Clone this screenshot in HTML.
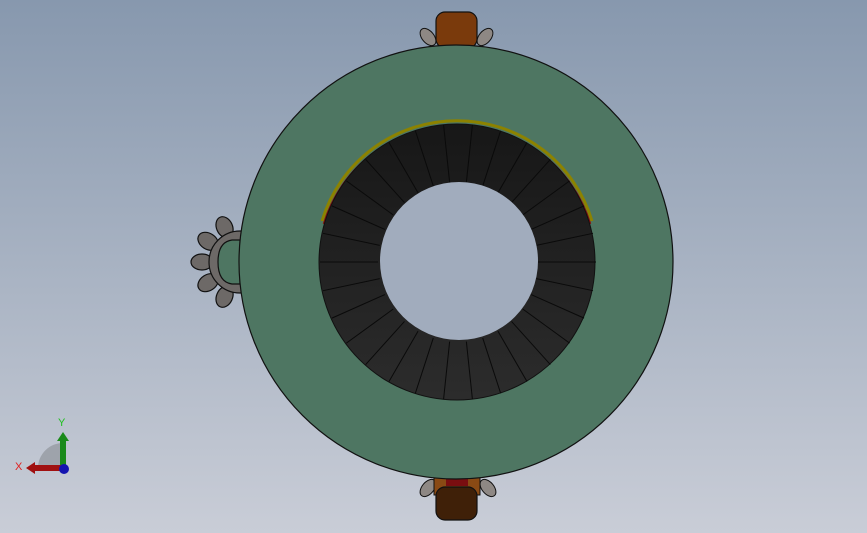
<!DOCTYPE html>
<html><head><style>html,body{margin:0;padding:0;width:867px;height:533px;overflow:hidden}</style></head>
<body>
<svg width="867" height="533" viewBox="0 0 867 533" xmlns="http://www.w3.org/2000/svg">
<defs>
<linearGradient id="bg" x1="0" y1="0" x2="0" y2="1">
<stop offset="0" stop-color="#8798ae"/><stop offset="1" stop-color="#c9cdd7"/>
</linearGradient>
<linearGradient id="dk" x1="0" y1="0" x2="0" y2="1">
<stop offset="0" stop-color="#171717"/><stop offset="1" stop-color="#2c2c2c"/>
</linearGradient>
</defs>
<rect width="867" height="533" fill="url(#bg)"/>
<!-- left gear -->
<g fill="#6d6967" stroke="#111" stroke-width="1.2">
<g transform="translate(240,262)">
<ellipse cx="-38" cy="0" rx="11" ry="8"/>
<ellipse cx="-38" cy="0" rx="11" ry="8" transform="rotate(33)"/>
<ellipse cx="-38" cy="0" rx="11" ry="8" transform="rotate(-33)"/>
<ellipse cx="-38" cy="0" rx="11" ry="8" transform="rotate(66)"/>
<ellipse cx="-38" cy="0" rx="11" ry="8" transform="rotate(-66)"/>
<circle r="31"/>
</g>
</g>
<path d="M240 240 L232 240 Q218 242 218 262 Q218 282 232 284 L240 284 Z" fill="#4e7662" stroke="#111" stroke-width="1.2"/>
<!-- top gear -->
<g fill="#8e8884" stroke="#111" stroke-width="1">
<ellipse cx="428" cy="37" rx="6" ry="10" transform="rotate(-40 428 37)"/>
<ellipse cx="485" cy="37" rx="6" ry="10" transform="rotate(40 485 37)"/>
</g>
<rect x="436" y="12" width="41" height="36" rx="9" fill="#7a3a0c" stroke="#111" stroke-width="1.2"/>
<!-- bottom gear -->
<g fill="#8e8884" stroke="#111" stroke-width="1">
<ellipse cx="428" cy="488" rx="6" ry="10" transform="rotate(40 428 488)"/>
<ellipse cx="488" cy="488" rx="6" ry="10" transform="rotate(-40 488 488)"/>
</g>
<rect x="434" y="470" width="46" height="25" fill="#8a4a14" stroke="#111" stroke-width="1"/>
<rect x="446" y="470" width="22" height="16" fill="#7a0e10"/>
<rect x="436" y="487" width="41" height="33" rx="9" fill="#3f2008" stroke="#111" stroke-width="1.2"/>
<!-- main ring -->
<circle cx="456" cy="262" r="217" fill="#4e7662" stroke="#111" stroke-width="1.2"/>
<path d="M322 221 A141 141 0 0 1 592 221" fill="none" stroke="#8c8200" stroke-width="3"/>
<path d="M324 224 A139 139 0 0 1 590 224" fill="none" stroke="#8a0c0c" stroke-width="2.5"/>
<circle cx="457" cy="262" r="138" fill="url(#dk)" stroke="#111" stroke-width="1"/>
<g stroke="#0a0a0a" stroke-width="1">
<g transform="translate(458,262)">
<line x1="0" y1="-80" x2="0" y2="-138" transform="rotate(6)"/>
<line x1="0" y1="-80" x2="0" y2="-138" transform="rotate(18)"/>
<line x1="0" y1="-80" x2="0" y2="-138" transform="rotate(30)"/>
<line x1="0" y1="-80" x2="0" y2="-138" transform="rotate(42)"/>
<line x1="0" y1="-80" x2="0" y2="-138" transform="rotate(54)"/>
<line x1="0" y1="-80" x2="0" y2="-138" transform="rotate(66)"/>
<line x1="0" y1="-80" x2="0" y2="-138" transform="rotate(78)"/>
<line x1="0" y1="-80" x2="0" y2="-138" transform="rotate(90)"/>
<line x1="0" y1="-80" x2="0" y2="-138" transform="rotate(102)"/>
<line x1="0" y1="-80" x2="0" y2="-138" transform="rotate(114)"/>
<line x1="0" y1="-80" x2="0" y2="-138" transform="rotate(126)"/>
<line x1="0" y1="-80" x2="0" y2="-138" transform="rotate(138)"/>
<line x1="0" y1="-80" x2="0" y2="-138" transform="rotate(150)"/>
<line x1="0" y1="-80" x2="0" y2="-138" transform="rotate(162)"/>
<line x1="0" y1="-80" x2="0" y2="-138" transform="rotate(174)"/>
<line x1="0" y1="-80" x2="0" y2="-138" transform="rotate(186)"/>
<line x1="0" y1="-80" x2="0" y2="-138" transform="rotate(198)"/>
<line x1="0" y1="-80" x2="0" y2="-138" transform="rotate(210)"/>
<line x1="0" y1="-80" x2="0" y2="-138" transform="rotate(222)"/>
<line x1="0" y1="-80" x2="0" y2="-138" transform="rotate(234)"/>
<line x1="0" y1="-80" x2="0" y2="-138" transform="rotate(246)"/>
<line x1="0" y1="-80" x2="0" y2="-138" transform="rotate(258)"/>
<line x1="0" y1="-80" x2="0" y2="-138" transform="rotate(270)"/>
<line x1="0" y1="-80" x2="0" y2="-138" transform="rotate(282)"/>
<line x1="0" y1="-80" x2="0" y2="-138" transform="rotate(294)"/>
<line x1="0" y1="-80" x2="0" y2="-138" transform="rotate(306)"/>
<line x1="0" y1="-80" x2="0" y2="-138" transform="rotate(318)"/>
<line x1="0" y1="-80" x2="0" y2="-138" transform="rotate(330)"/>
<line x1="0" y1="-80" x2="0" y2="-138" transform="rotate(342)"/>
<line x1="0" y1="-80" x2="0" y2="-138" transform="rotate(354)"/>
</g>
</g>
<circle cx="459" cy="261" r="79" fill="#a1acbd"/>
<!-- triad -->
<path d="M63 468 L38 468 A25 25 0 0 1 63 443 Z" fill="#9ea3ab"/>
<rect x="60" y="440" width="6" height="28" fill="#1a8a1a"/>
<path d="M57 441 L63 432 L69 441 Z" fill="#1a8a1a"/>
<rect x="34" y="465" width="28" height="6" fill="#a01010"/>
<path d="M35 462 L26 468 L35 474 Z" fill="#a01010"/>
<circle cx="64" cy="469" r="5" fill="#1414b0"/>
<text x="58" y="426" font-family="Liberation Sans, sans-serif" font-size="11" fill="#20c020">Y</text>
<text x="15" y="470" font-family="Liberation Sans, sans-serif" font-size="11" fill="#e02020">X</text>
</svg>
</body></html>
